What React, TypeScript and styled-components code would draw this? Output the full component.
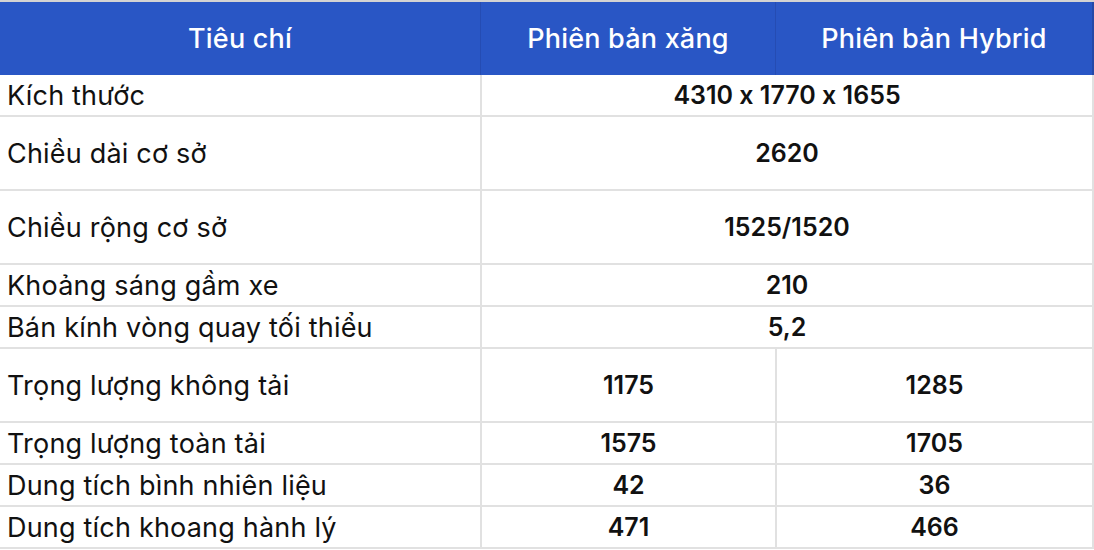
import React from 'react'
import styled, { createGlobalStyle } from 'styled-components'

const GlobalStyle = createGlobalStyle`
  html, body {
    margin: 0;
    padding: 0;
    background: #ffffff;
  }
  body {
    font-family: Inter, 'Noto Sans', sans-serif;
    font-feature-settings: 'calt' 0;
    color: #111111;
  }
`

const SpecTable = styled.table`
  width: 1094px;
  table-layout: fixed;
  border-collapse: separate;
  border-spacing: 0;
  border-top: 2px solid #d3d3d3;
`

const HeadCell = styled.th<{ $first?: boolean; $last?: boolean }>`
  box-sizing: border-box;
  height: 73px;
  background: #2956c5;
  color: #ffffff;
  font-size: 27px;
  font-weight: 500;
  letter-spacing: 0.2px;
  text-align: center;
  padding: 0;
  border-left: ${(p) => (p.$first ? 'none' : '1px solid #254cb3')};
  border-right: ${(p) => (p.$last ? '2px solid #2449a8' : 'none')};
`

const Row = styled.tr``

const LabelCell = styled.td<{ $tall?: boolean }>`
  box-sizing: border-box;
  height: ${(p) => (p.$tall ? 74 : 42)}px;
  padding: 0 0 0 7px;
  font-size: 27px;
  font-weight: 400;
  letter-spacing: 0.2px;
  color: #111111;
  border-bottom: 2px solid #e1e1e1;
  vertical-align: middle;
  white-space: nowrap;
`

const ValueCell = styled.td<{ $last?: boolean }>`
  box-sizing: border-box;
  padding: 0;
  font-size: 25px;
  font-weight: 600;
  color: #111111;
  text-align: center;
  vertical-align: middle;
  border-bottom: 2px solid #e1e1e1;
  border-left: 2px solid #e1e1e1;
  border-right: ${(p) => (p.$last ? '2px solid #e1e1e1' : 'none')};
`

type Spec = {
  label: string
  tall?: boolean
  values: string[]
}

const specs: Spec[] = [
  { label: 'Kích thước', values: ['4310 x 1770 x 1655'] },
  { label: 'Chiều dài cơ sở', tall: true, values: ['2620'] },
  { label: 'Chiều rộng cơ sở', tall: true, values: ['1525/1520'] },
  { label: 'Khoảng sáng gầm xe', values: ['210'] },
  { label: 'Bán kính vòng quay tối thiểu', values: ['5,2'] },
  { label: 'Trọng lượng không tải', tall: true, values: ['1175', '1285'] },
  { label: 'Trọng lượng toàn tải', values: ['1575', '1705'] },
  { label: 'Dung tích bình nhiên liệu', values: ['42', '36'] },
  { label: 'Dung tích khoang hành lý', values: ['471', '466'] },
]

export default function App() {
  return (
    <>
      <GlobalStyle />
      <SpecTable>
        <colgroup>
          <col style={{ width: 480 }} />
          <col style={{ width: 295 }} />
          <col style={{ width: 319 }} />
        </colgroup>
        <thead>
          <tr>
            <HeadCell $first>Tiêu chí</HeadCell>
            <HeadCell>Phiên bản xăng</HeadCell>
            <HeadCell $last>Phiên bản Hybrid</HeadCell>
          </tr>
        </thead>
        <tbody>
          {specs.map((s) => (
            <Row key={s.label}>
              <LabelCell $tall={s.tall}>{s.label}</LabelCell>
              {s.values.length === 1 ? (
                <ValueCell colSpan={2} $last>
                  {s.values[0]}
                </ValueCell>
              ) : (
                s.values.map((v, i) => (
                  <ValueCell key={i} $last={i === s.values.length - 1}>
                    {v}
                  </ValueCell>
                ))
              )}
            </Row>
          ))}
        </tbody>
      </SpecTable>
    </>
  )
}
